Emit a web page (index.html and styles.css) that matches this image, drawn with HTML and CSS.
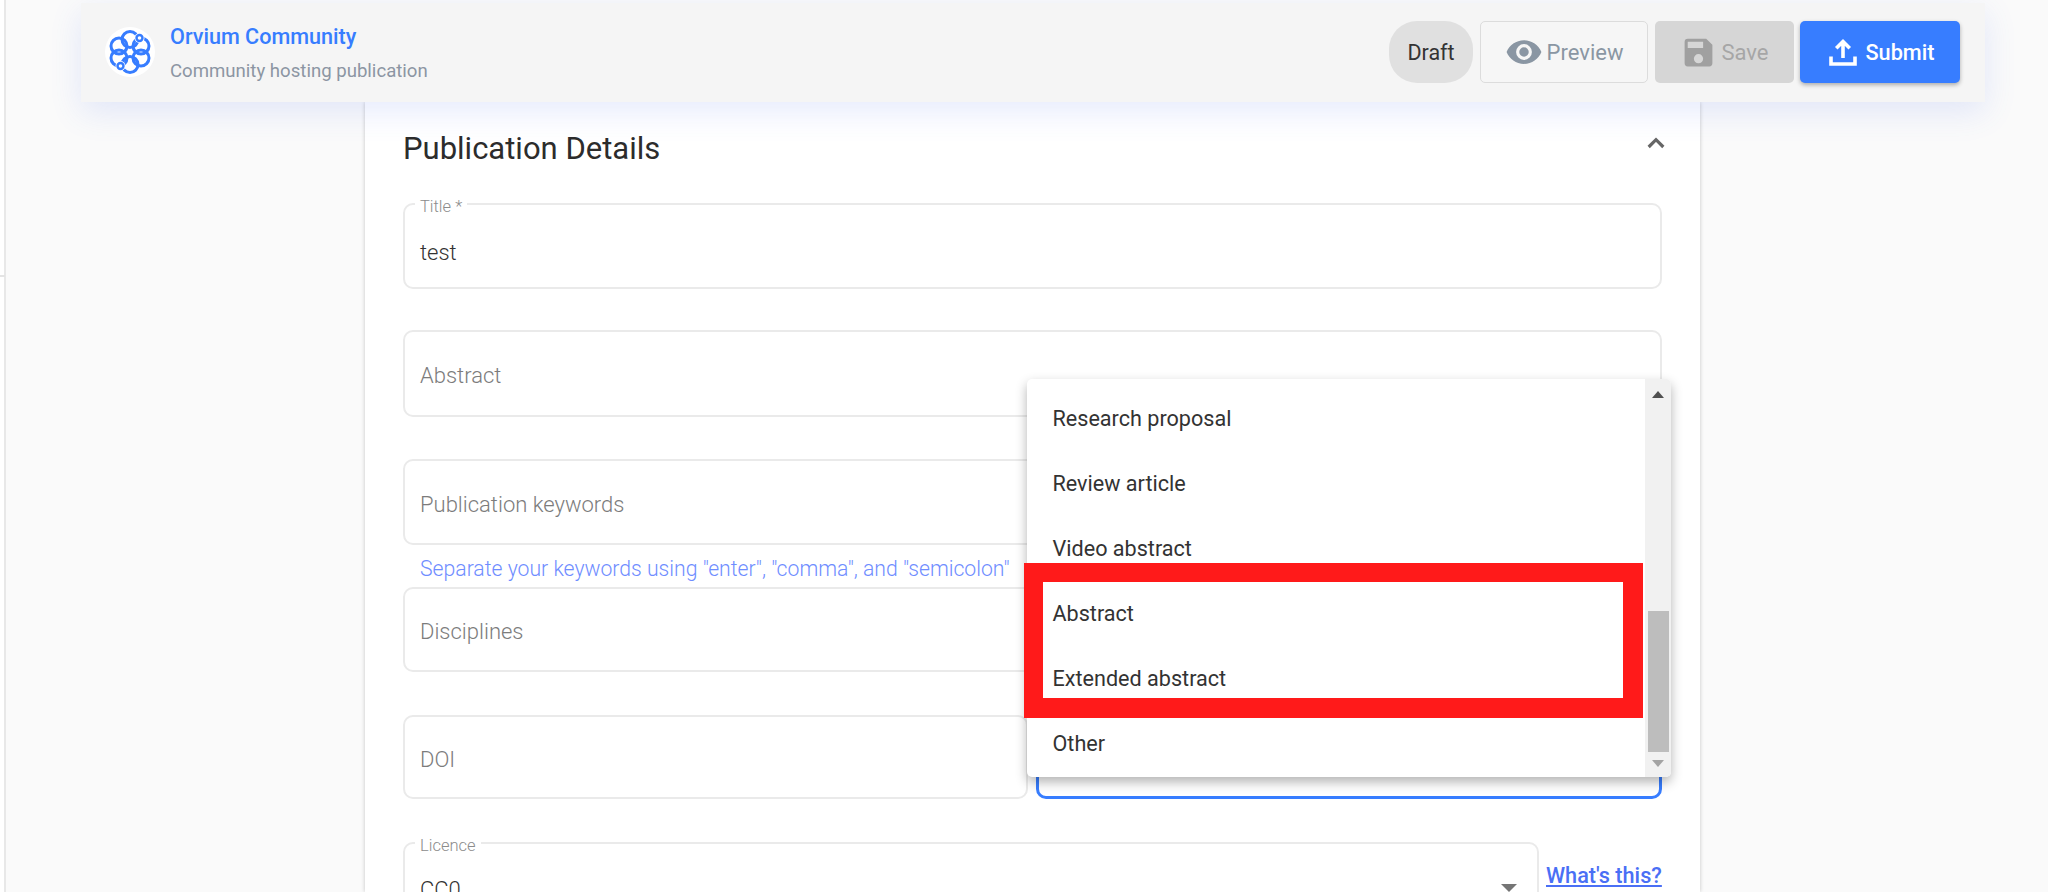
FILE: index.html
```html
<!DOCTYPE html>
<html lang="en">
<head>
<meta charset="utf-8">
<title>Publication Details</title>
<link rel="stylesheet" href="styles.css">
</head>
<body>
<div class="rail"><span class="rail-tick"></span></div>
<div class="page">
  <header class="topbar">
    <div class="brand">
      <span class="logo">
        <svg viewBox="0 0 50 50" width="50" height="50" fill="none" stroke="#377dff" stroke-width="3">
          <circle cx="25" cy="25" r="25" fill="#fff" stroke="none"/>
          <circle cx="25" cy="12.500" r="8"/>
          <circle cx="36" cy="19" r="8"/>
          <circle cx="36" cy="31" r="8"/>
          <circle cx="25" cy="37.500" r="8"/>
          <circle cx="14" cy="31" r="8"/>
          <circle cx="14" cy="19" r="8"/>
          <circle cx="34.500" cy="11" r="5" fill="#fff" stroke="none"/>
          <circle cx="15.500" cy="39" r="5" fill="#fff" stroke="none"/>
          <circle cx="34.500" cy="11" r="3" fill="#fff" stroke-width="2.400"/>
          <circle cx="15.500" cy="39" r="3" fill="#fff" stroke-width="2.400"/>
        </svg>
      </span>
      <div class="brand-text">
        <div class="brand-name">Orvium Community</div>
        <div class="brand-sub">Community hosting publication</div>
      </div>
    </div>
    <div class="actions">
      <span class="chip">Draft</span>
      <button class="btn btn-outline" type="button">
        <svg viewBox="0 0 24 24" width="38" height="38"><path fill="#8a96a3" d="M12 4.500C7 4.500 2.730 7.610 1 12c1.730 4.390 6 7.500 11 7.500s9.270-3.110 11-7.500c-1.730-4.390-6-7.500-11-7.500zM12 17a5 5 0 1 1 0-10 5 5 0 0 1 0 10zm0-8a3 3 0 1 0 0 6 3 3 0 0 0 0-6z"/></svg>
        Preview
      </button>
      <button class="btn btn-disabled" type="button">
        <svg viewBox="0 0 24 24" width="37" height="37"><path fill="#a0a0a0" d="M17 3H5a2 2 0 0 0-2 2v14a2 2 0 0 0 2 2h14a2 2 0 0 0 2-2V7l-4-4zm-5 16a3 3 0 1 1 0-6 3 3 0 0 1 0 6zm3-10H5V5h10v4z"/></svg>
        Save
      </button>
      <button class="btn btn-primary" type="button">
        <svg viewBox="0 0 24 24" width="36" height="36" fill="none" stroke="#fff" stroke-width="2.400"><path d="M12 16V5M7.500 9.500 12 5l4.500 4.500M4 15v5h16v-5"/></svg>
        Submit
      </button>
    </div>
  </header>

  <main class="card">
    <div class="card-head">
      <h2 class="card-title">Publication Details</h2>
      <svg class="chevron" viewBox="0 0 24 24" width="32" height="32" fill="none" stroke="#666" stroke-width="2.400"><path d="M6.500 15l5.500-5.500 5.500 5.500"/></svg>
    </div>

    <div class="field field-title">
      <span class="float-label">Title *</span>
      <span class="value">test</span>
    </div>
    <div class="field field-abstract"><span class="placeholder">Abstract</span></div>
    <div class="field field-keywords"><span class="placeholder">Publication keywords</span></div>
    <div class="hint">Separate your keywords using "enter", "comma", and "semicolon"</div>
    <div class="field field-disciplines"><span class="placeholder">Disciplines</span></div>
    <div class="split">
      <div class="field field-doi"><span class="placeholder">DOI</span></div>
      <div class="field field-focus"></div>
    </div>
    <div class="licence-row">
      <div class="field field-licence">
        <span class="float-label">Licence</span>
        <span class="value">CC0</span>
        <span class="caret"></span>
      </div>
      <a class="help-link" href="#">What's this?</a>
    </div>
  </main>
</div>

<div class="menu">
  <ul class="menu-list">
    <li>Research proposal</li>
    <li>Review article</li>
    <li>Video abstract</li>
    <li>Abstract</li>
    <li>Extended abstract</li>
    <li>Other</li>
  </ul>
  <div class="scrollbar">
    <span class="arrow arrow-up"></span>
    <span class="track"><span class="thumb"></span></span>
    <span class="arrow arrow-down"></span>
  </div>
</div>
<div class="annotation"></div>
</body>
</html>
```
FILE: styles.css
```css
* { box-sizing: border-box; }
html, body { margin: 0; height: 892px; overflow: hidden; }
body {
  background: #fafafa;
  font-family: Roboto, "Liberation Sans", sans-serif;
  color: #333;
  position: relative;
}
.rail {
  position: absolute; left: 0; top: 0; bottom: 0; width: 6px;
  background: #fff; border-right: 2px solid #e8e8e8;
}
.rail-tick { position: absolute; left: 0; top: 275px; width: 5px; height: 2px; background: #e4e4e4; }

.page { display: flex; flex-direction: column; align-items: flex-start; padding-top: 3px; }
.topbar {
  position: relative; z-index: 2;
  margin-left: 81px; width: 1904px; height: 99px;
  background: #f5f5f5;
  display: flex; align-items: center; justify-content: space-between;
  padding: 0 25px 0 24px;
  box-shadow: 0 10px 30px rgba(80, 110, 240, .14);
}
.brand { display: flex; align-items: center; gap: 15px; margin-top: -1px; }
.logo { display: block; width: 50px; height: 50px; }
.logo svg { display: block; }
.brand-text { padding-top: 4px; }
.brand-name { font-size: 21.6px; font-weight: 500; color: #377dff; line-height: 26px; }
.brand-sub { font-size: 18.6px; color: #8c95a3; line-height: 26px; margin-top: 8px; }

.actions { display: flex; align-items: center; gap: 7px; margin-top: -1px; }
.chip {
  width: 84px; height: 62px; border-radius: 28px; background: #e0e0e0;
  display: flex; align-items: center; justify-content: center;
  font-size: 21.5px; font-weight: 400; color: #333;
}
.btn {
  height: 62px; border-radius: 5px; border: 0;
  display: flex; align-items: center; justify-content: center; gap: 4px;
  font: 400 22px Roboto, "Liberation Sans", sans-serif;
  padding: 0;
}
.btn-outline { width: 168px; background: #f6f6f6; border: 1.5px solid #dcdcdc; color: #8a96a3; }
.btn-disabled { width: 139px; background: #d6d6d6; color: #a6a6a6; margin-right: -1px; }
.btn-primary { width: 160px; background: #377dff; color: #fff; font-weight: 500; font-size: 21.7px; box-shadow: 0 2px 4px rgba(0,0,0,.3); }

.card {
  margin-left: 365px; width: 1335px; height: 790px;
  background: #fff; padding: 0 38px;
  box-shadow: 0 0 4px rgba(0,0,0,.22);
}
.card-head { height: 101px; display: flex; align-items: flex-start; justify-content: space-between; }
.card-title { margin: 25px 0 0; font-size: 31px; font-weight: 400; line-height: 44px; color: #2c2c2c; }
.chevron { margin: 25px -10px 0 0; }

.field {
  position: relative; border: 2px solid #eaeaea; border-radius: 10px;
  display: flex; align-items: center; padding: 4px 15px 0; font-size: 22px;
  background: #fff;
}
.field-title { height: 86px; margin-bottom: 41px; padding-top: 14px; }
.field-abstract { height: 87px; margin-bottom: 42px; }
.field-keywords { height: 86px; }
.hint { height: 42px; padding-left: 17px; font-size: 21.2px; font-weight: 300; color: #6f8dff; line-height: 47px; white-space: nowrap; }
.field-disciplines { height: 85px; margin-bottom: 43px; }
.split { display: flex; gap: 8px; height: 84px; margin-bottom: 43px; }
.field-doi { width: 625px; }
.field-focus { flex: 1; border-color: #377dff; border-width: 3px; }
.licence-row { display: flex; gap: 7px; }
.field-licence { width: 1136px; height: 90px; padding-top: 33px; align-items: flex-start; }

.placeholder { font-weight: 300; color: #7c7c7c; }
.value { font-weight: 300; color: #333; line-height: 26px; }
.float-label {
  position: absolute; left: 10px; top: -8px; padding: 0 5px;
  background: #fff; font-size: 16.5px; font-weight: 300; color: #8c8c8c; line-height: 20px;
}
.caret {
  position: absolute; right: 20px; top: 40px; width: 0; height: 0;
  border-left: 8px solid transparent; border-right: 8px solid transparent; border-top: 8px solid #757575;
}
.help-link { font-size: 21.7px; font-weight: 500; color: #4a6ff5; line-height: 26px; margin-top: 21px; white-space: nowrap; }

.menu {
  position: absolute; left: 1027px; top: 379px; width: 644px; height: 398px;
  background: #fff; border-radius: 5px; overflow: hidden; display: flex;
  box-shadow: 0 5px 12px rgba(0,0,0,.3);
}
.menu-list { list-style: none; margin: 0; padding: 7px 0 0 25.5px; flex: 1; font-size: 21.6px; color: #333; }
.menu-list li { height: 65px; line-height: 65px; }
.scrollbar { width: 26px; background: #f1f1f1; display: flex; flex-direction: column; align-items: center; padding: 12px 0 10px; }
.track { flex: 1; width: 21px; display: flex; flex-direction: column; justify-content: flex-end; padding-bottom: 8px; }
.thumb { height: 141px; background: #bdbdbd; display: block; }
.arrow { width: 0; height: 0; border-left: 6px solid transparent; border-right: 6px solid transparent; }
.arrow-up { border-bottom: 7px solid #505050; }
.arrow-down { border-top: 7px solid #a3a3a3; }

.annotation {
  position: absolute; left: 1024px; top: 563px; width: 619px; height: 155px;
  border: solid #ff1a1a; border-width: 19px 20px 20px 19px;
}
```
